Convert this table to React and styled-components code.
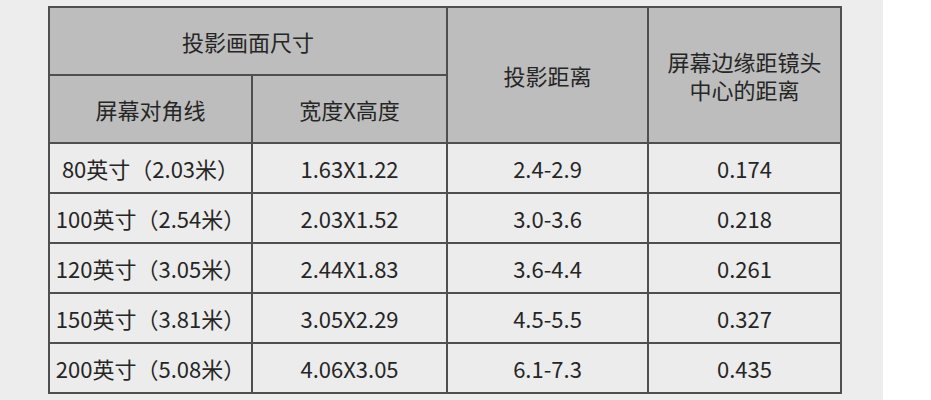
import React from 'react';
import styled, { createGlobalStyle } from 'styled-components';

const GlobalStyle = createGlobalStyle`
  html, body {
    margin: 0;
    padding: 0;
    background: #ffffff;
  }
  body {
    font-family: "Noto Sans CJK SC", "Noto Sans", sans-serif;
  }
`;

const Page = styled.div`
  display: flex;
  width: 931px;
  height: 400px;
  overflow: hidden;
`;

const Canvas = styled.div`
  width: 883px;
  height: 400px;
  background: #ededed;
  padding: 6px 0 0 48px;
  box-sizing: border-box;
`;

const Table = styled.table`
  border-collapse: collapse;
  border: 2px solid #1c1c1c;
  table-layout: fixed;
  width: 794px;
  color: #262626;
`;

const HeadCell = styled.th`
  background: #bdbdbd;
  border: 2px solid #4f4f4f;
  font-weight: 400;
  font-size: 22px;
  line-height: 28px;
  text-align: center;
  vertical-align: middle;
  padding: 0;
  height: ${p => p.$h}px;
`;

const Cell = styled.td`
  background: #ececec;
  border: 2px solid #4f4f4f;
  font-size: 22px;
  line-height: 28px;
  text-align: center;
  vertical-align: middle;
  padding: 0;
  height: 48px;
`;

const rows = [
  ['80英寸（2.03米）', '1.63X1.22', '2.4-2.9', '0.174'],
  ['100英寸（2.54米）', '2.03X1.52', '3.0-3.6', '0.218'],
  ['120英寸（3.05米）', '2.44X1.83', '3.6-4.4', '0.261'],
  ['150英寸（3.81米）', '3.05X2.29', '4.5-5.5', '0.327'],
  ['200英寸（5.08米）', '4.06X3.05', '6.1-7.3', '0.435'],
];

export default function App() {
  return (
    <Page>
      <GlobalStyle />
      <Canvas>
        <Table>
          <colgroup>
            <col style={{ width: 203 }} />
            <col style={{ width: 195 }} />
            <col style={{ width: 201 }} />
            <col style={{ width: 193 }} />
          </colgroup>
          <thead>
            <tr>
              <HeadCell colSpan={2} $h={66}>投影画面尺寸</HeadCell>
              <HeadCell rowSpan={2}>投影距离</HeadCell>
              <HeadCell rowSpan={2}>屏幕边缘距镜头<br />中心的距离</HeadCell>
            </tr>
            <tr>
              <HeadCell $h={66}>屏幕对角线</HeadCell>
              <HeadCell $h={66}>宽度X高度</HeadCell>
            </tr>
          </thead>
          <tbody>
            {rows.map(r => (
              <tr key={r[0]}>
                {r.map((v, i) => <Cell key={i}>{v}</Cell>)}
              </tr>
            ))}
          </tbody>
        </Table>
      </Canvas>
    </Page>
  );
}
